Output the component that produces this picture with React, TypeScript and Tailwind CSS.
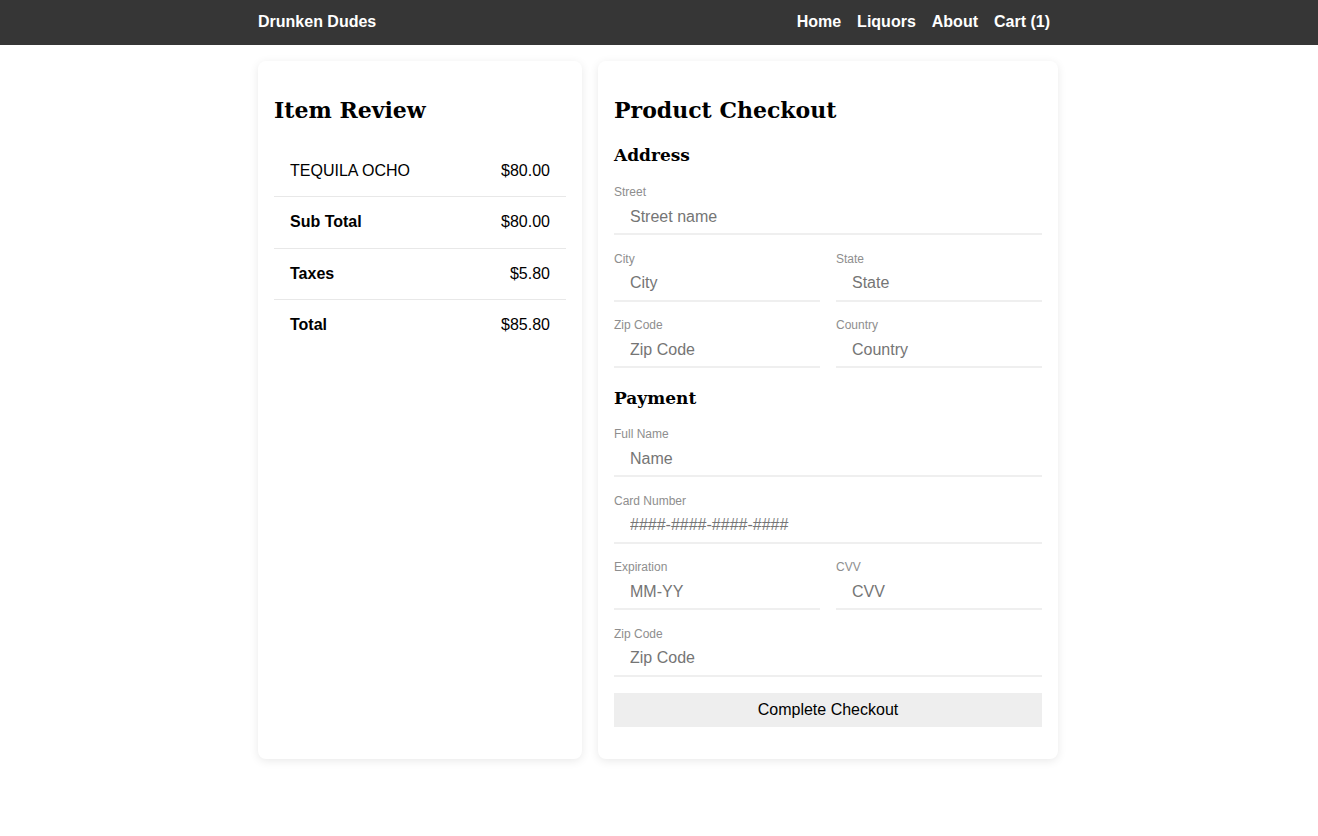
const sans = "font-['Liberation_Sans',Arial,sans-serif]";
const serif = "font-['DejaVu_Serif',Georgia,serif]";

const items = [
  { label: "TEQUILA OCHO", value: "$80.00", bold: false },
  { label: "Sub Total", value: "$80.00", bold: true },
  { label: "Taxes", value: "$5.80", bold: true },
  { label: "Total", value: "$85.80", bold: true },
];

function Field({ label, placeholder, last }: { label: string; placeholder: string; last?: boolean }) {
  return (
    <div className={`flex flex-col ${last ? "mb-4" : "mb-[16.5px]"}`}>
      <label className="h-[14px] text-[12px] leading-[14px] text-[#8e8e8e]">{label}</label>
      <input
        placeholder={placeholder}
        className="mt-px h-[35px] w-full border-b-2 border-[#efefef] px-4 text-[16px] text-black outline-none placeholder:text-[#757575]"
      />
    </div>
  );
}

export default function App() {
  return (
    <div className={`min-h-screen bg-white pr-[2px] ${sans}`}>
      <header className="-mr-[2px] h-[45px] bg-[#363636] pr-[2px]">
        <nav className="mx-auto flex h-full w-[800px] items-center justify-between pb-[2px] text-[16px] font-bold text-white">
          <a href="#">Drunken Dudes</a>
          <div className="flex">
            {["Home", "Liquors", "About", "Cart (1)"].map((l) => (
              <a key={l} href="#" className="px-2">
                {l}
              </a>
            ))}
          </div>
        </nav>
      </header>

      <main className="mx-auto mt-4 flex w-[800px] items-stretch gap-4">
        <section className="w-[324px] rounded-lg bg-white p-4 shadow-[0_2px_10px_rgba(0,0,0,0.09)]">
          <h2 className={`${serif} mt-5 text-[22px] font-bold leading-[26px]`}>Item Review</h2>
          <div className="mt-[22.5px]">
            {items.map((it, i) => (
              <div
                key={it.label}
                className={`flex items-center justify-between px-4 py-4 text-[16px] leading-[18.5px] ${
                  i < items.length - 1 ? "border-b border-[#e8e8e8]" : ""
                }`}
              >
                <span className={it.bold ? "font-bold" : ""}>{it.label}</span>
                <span>{it.value}</span>
              </div>
            ))}
          </div>
        </section>

        <section className="w-[460px] rounded-lg bg-white px-4 pt-4 pb-8 shadow-[0_2px_10px_rgba(0,0,0,0.09)]">
          <h2 className={`${serif} mt-5 text-[22px] font-bold leading-[26px]`}>Product Checkout</h2>
          <h3 className={`${serif} mt-[21px] mb-[19px] text-[17px] font-bold leading-[22px]`}>Address</h3>
          <Field label="Street" placeholder="Street name" />
          <div className="grid grid-cols-2 gap-x-4">
            <Field label="City" placeholder="City" />
            <Field label="State" placeholder="State" />
            <Field label="Zip Code" placeholder="Zip Code" />
            <Field label="Country" placeholder="Country" />
          </div>
          <h3 className={`${serif} mt-[2.5px] mb-[18px] text-[17px] font-bold leading-[22px]`}>Payment</h3>
          <Field label="Full Name" placeholder="Name" />
          <Field label="Card Number" placeholder="####-####-####-####" />
          <div className="grid grid-cols-2 gap-x-4">
            <Field label="Expiration" placeholder="MM-YY" />
            <Field label="CVV" placeholder="CVV" />
          </div>
          <Field label="Zip Code" placeholder="Zip Code" last />
          <button className="h-[34px] w-full bg-[#eeeeee] text-[16px] text-black">Complete Checkout</button>
        </section>
      </main>
    </div>
  );
}
